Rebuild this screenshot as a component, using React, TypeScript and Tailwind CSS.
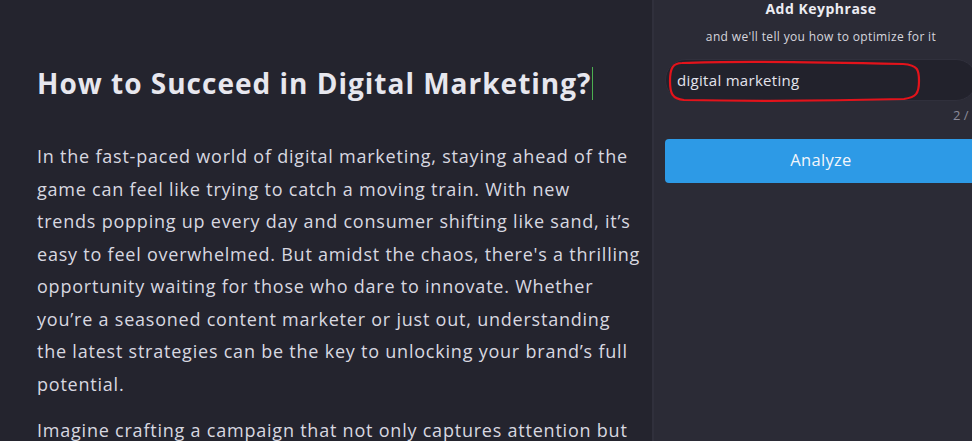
import React from "react";

const firstParagraph = [
  "In the fast-paced world of digital marketing, staying ahead of the",
  "game can feel like trying to catch a moving train. With new",
  "trends popping up every day and consumer shifting like sand, it\u2019s",
  "easy to feel overwhelmed. But amidst the chaos, there's a thrilling",
  "opportunity waiting for those who dare to innovate. Whether",
  "you\u2019re a seasoned content marketer or just out, understanding",
  "the latest strategies can be the key to unlocking your brand\u2019s full",
  "potential.",
];

export default function App() {
  return (
    <div
      className="flex h-[441px] w-[972px] overflow-hidden bg-[#24242e]"
      style={{ fontFamily: "'Open Sans', 'Noto Sans', sans-serif" }}
    >
      {/* editor */}
      <main className="w-[652px] shrink-0 overflow-hidden pl-[37px] pr-[14px] pt-[62px]">
        <h1 className="flex items-center text-[28px] font-bold tracking-[1px] text-[#e7e7ee]">
          <span>How to Succeed in Digital Marketing?</span>
          <span className="ml-[1px] h-[33px] w-px bg-[#4caf50]" />
        </h1>
        <div className="mt-[36px] whitespace-nowrap text-[18px] leading-[32.5px] tracking-[0.78px] text-[#d8d8e0]">
          <p className="mb-[14px]">
            {firstParagraph.map((line, i) => (
              <React.Fragment key={i}>
                {line}
                {i < firstParagraph.length - 1 && <br />}
              </React.Fragment>
            ))}
          </p>
          <p>
            Imagine crafting a campaign that not only captures attention but
            <br />
            also converts readers into loyal customers.
          </p>
        </div>
      </main>

      {/* sidebar */}
      <aside className="w-[336px] shrink-0 border-l-2 border-[#30303c] bg-[#2b2b36] px-[11px]">
        <div className="pt-[2px] text-center text-[14px] font-bold leading-none tracking-[0.5px] text-[#ececf2]">
          Add Keyphrase
        </div>
        <div className="mt-[12px] text-center text-[12px] tracking-[0.35px] text-[#d6d6de]">
          and we'll tell you how to optimize for it
        </div>
        <div className="relative mt-[13px]">
          <div className="flex h-[42px] items-center rounded-full border border-[#30303c] bg-[#22222c] pl-[11px] text-[15px] tracking-[0.3px] text-[#e4e4ec]">
            digital marketing
          </div>
          <svg
            className="absolute left-[3px] top-[1px]"
            width="254"
            height="44"
            viewBox="0 0 254 44"
            fill="none"
          >
            <path
              d="M14 3 C60 1 150 2 235 4 C250 5 251 10 251 21 C251 34 248 37 236 39 C160 41 70 41 16 40 C4 39 2 33 2 21 C2 8 5 3 14 3 Z"
              stroke="#e3131b"
              strokeWidth="2.2"
            />
          </svg>
        </div>
        <div className="mt-[5px] whitespace-nowrap pl-[288px] text-[13px] text-[#8b8b9a]">2 / 10</div>
        <button className="mt-[13px] h-[44px] w-full rounded-[4px] bg-[#2d9ae6] text-[16.5px] tracking-[0.3px] text-[#f2f6fb]">
          Analyze
        </button>
      </aside>
    </div>
  );
}
